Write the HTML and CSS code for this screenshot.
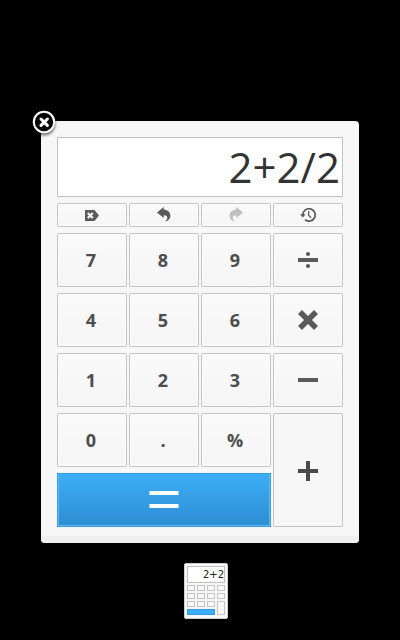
FILE: index.html
```
<!DOCTYPE html>
<html lang="en">
<head>
<meta charset="utf-8">
<title>Calculator</title>
<link rel="stylesheet" href="styles.css">
</head>
<body>
<main class="calculator">
  <svg class="close" width="30" height="30" viewBox="0 0 30 30"><circle cx="15" cy="15" r="10.2" fill="#080808" stroke="#fff" stroke-width="2"/><path d="M12 12l6.4 6.4m0-6.4L12 18.4" stroke="#fff" stroke-width="3" stroke-linecap="round"/></svg>
  <div class="display">2+2/2</div>
  <div class="keys">
    <button class="key"><svg width="14" height="11" viewBox="0 0 14 11"><path d="M0 0h9.5L14 5.5 9.5 11H0z" fill="#5a5a5a"/><path d="M2.8 3l5 5m0-5l-5 5" stroke="#f7f7f7" stroke-width="2.2"/></svg></button>
    <button class="key"><svg class="turn" width="14" height="15" viewBox="0 0 14 15"><path d="M0 5.4L6.7 0v2.6C11 2.9 13.4 5.6 13.4 9c0 3-2.6 5.4-6.1 5.5 2.2-1.1 3-2.5 3-3.8 0-1.7-1.3-2.5-3.6-2.5v2.8z" fill="#5a5a5a"/></svg></button>
    <button class="key"><svg class="turn" width="14" height="15" viewBox="0 0 14 15"><path d="M14 5.4L7.3 0v2.6C3 2.9.6 5.6.6 9c0 3 2.6 5.4 6.1 5.5-2.2-1.1-3-2.5-3-3.8 0-1.7 1.3-2.5 3.6-2.5v2.8z" fill="#bebebe"/></svg></button>
    <button class="key"><svg width="16" height="14" viewBox="0 0 16 14" fill="none" stroke="#5a5a5a"><path d="M2.8 7a6.2 6.2 0 1 1 2.2 4.7" stroke-width="1.7"/><path d="M0 6.3h5.6L2.8 9.6z" fill="#5a5a5a" stroke="none"/><path d="M8.7 3v4.2l2.3 2.6" stroke-width="1.3"/></svg></button>
    <button class="key">7</button><button class="key">8</button><button class="key">9</button>
    <button class="key"><svg width="20" height="18" viewBox="0 0 20 18" fill="#5a5a5a"><path d="M0 7h20v4H0z"/><circle cx="10" cy="3" r="2.1"/><circle cx="10" cy="15" r="2.1"/></svg></button>
    <button class="key">4</button><button class="key">5</button><button class="key">6</button>
    <button class="key"><svg width="20" height="20" viewBox="0 0 20 20"><path d="M2 2l16 16m0-16L2 18" stroke="#5a5a5a" stroke-width="5.6"/></svg></button>
    <button class="key">1</button><button class="key">2</button><button class="key">3</button>
    <button class="key"><svg width="20" height="4"><path d="M0 0h20v4H0z" fill="#5a5a5a"/></svg></button>
    <button class="key">0</button><button class="key">.</button><button class="key">%</button>
    <button class="key plus"><svg width="20" height="20"><path d="M0 8h8V0h4v8h8v4h-8v8H8v-8H0z" fill="#4a4a4a"/></svg></button>
    <button class="key equals"><svg width="30" height="18"><path d="M.5 0h29v4H.5zM.5 13h29v4H.5z" fill="#fff"/></svg></button>
  </div>
</main>
<div class="app-icon">
  <div class="mini-display">2+2</div>
  <div class="mini-keys">
    <i></i><i></i><i></i><i></i>
    <i></i><i></i><i></i><i></i>
    <i></i><i></i><i></i><i class="mini-plus"></i>
    <i class="mini-equals"></i>
  </div>
</div>
</body>
</html>
```
FILE: styles.css
```
* { box-sizing: border-box; }
body {
  margin: 0;
  height: 640px;
  padding-top: 121px;
  background: #000;
  display: flex;
  flex-direction: column;
  align-items: center;
  overflow: hidden;
  font-family: "Open Sans", "Noto Sans", sans-serif;
}
.calculator {
  position: relative;
  width: 318px;
  height: 422px;
  padding: 16px;
  background: #f7f7f7;
  border-radius: 4px;
  box-shadow: inset 0 -7px #efefef;
}
.close {
  position: absolute;
  left: -12px;
  top: -14px;
  filter: drop-shadow(0 2px 1.5px rgba(0, 0, 0, .6));
}
.display {
  height: 60px;
  padding-right: 2px;
  border: 1px solid #c0c0c0;
  background: #fff;
  color: #333;
  font-size: 42px;
  line-height: 57px;
  text-align: right;
}
.keys {
  display: grid;
  grid-template-columns: repeat(4, 70px);
  grid-template-rows: 24px repeat(5, 54px);
  gap: 6px 2px;
  margin-top: 6px;
}
.key {
  display: flex;
  align-items: center;
  justify-content: center;
  margin: 0;
  padding: 0 2px 0 0;
  border: 1px solid #c4c4c4;
  border-radius: 2px;
  background: linear-gradient(#fafafa, #f5f5f5);
  box-shadow: inset 0 0 0 1px #fcfcfc;
  color: #4d4d4d;
  font: bold 18px "Open Sans", "Noto Sans", sans-serif;
}
.key svg { display: block; margin-right: -2px; }
.key .turn { margin-bottom: 1px; }
.plus {
  grid-column: 4;
  grid-row: 5 / 7;
  padding-top: 2px;
  background: #f7f7f7;
  box-shadow: none;
}
.equals {
  grid-column: 1 / 4;
  border-color: #349be0;
  border-radius: 0;
  background: linear-gradient(#3daef7, #2d8ed2);
  box-shadow: inset 1px -1px #67b9f0, inset -1px 0 #67b9f0;
}
.equals svg { margin-right: -1px; }
.app-icon {
  width: 44px;
  height: 56px;
  margin: 20px 0 0 12px;
  padding: 2px;
  background: #f7f7f7;
  border: 1px solid #d0d0d0;
  border-radius: 2px;
}
.mini-display {
  height: 17px;
  border: 1px solid #bebebe;
  background: #fff;
  color: #222;
  font: 10px/15px "DejaVu Sans", sans-serif;
  text-align: right;
}
.mini-keys {
  display: grid;
  grid-template-columns: repeat(4, 8px);
  grid-template-rows: repeat(4, 6px);
  gap: 2px;
  margin-top: 2px;
}
.mini-keys i { border: 1px solid #c4c4c4; }
.mini-keys .mini-plus { grid-column: 4; grid-row: 3 / 5; }
.mini-keys .mini-equals {
  grid-column: 1 / 4;
  background: #3daef7;
  border-color: #349be0;
}
```
